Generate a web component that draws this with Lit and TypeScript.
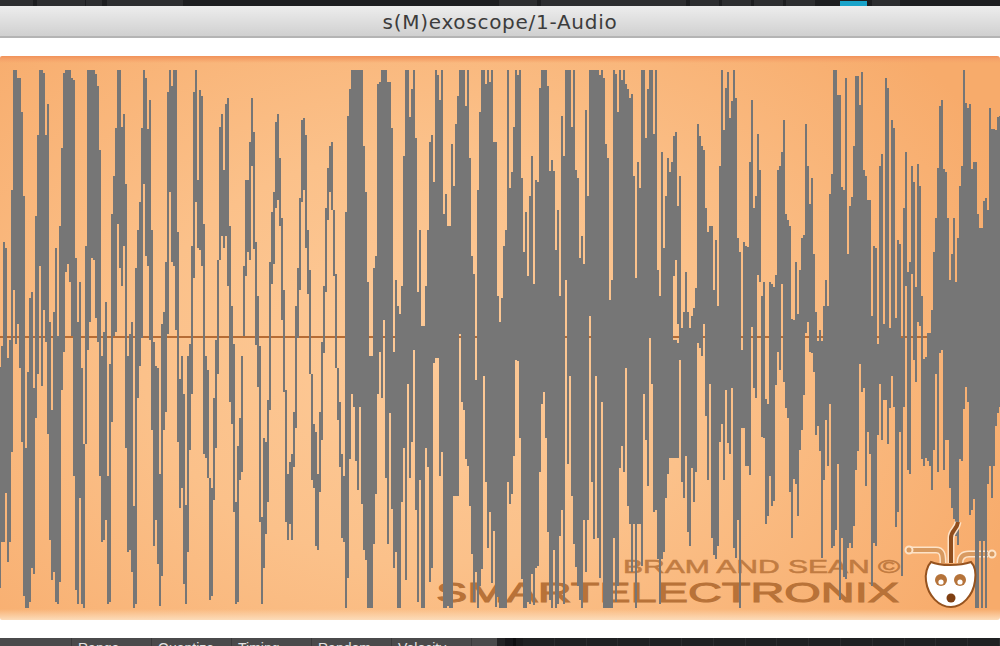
import { LitElement, html, css, svg } from "lit";
import { customElement } from "lit/decorators.js";

// Oscilloscope trace: one "top,bottom" span for each 2px column, in four sweeps.
const SWEEPS = [
  `870,1505 808,1372 510,1372 527,1230 843,1430 790,1372 360,1112 15,648 15,803 38,745 38,872 135,1085 377,1528 1102,1562 883,1562 670,1545 653,1447 930,1465 435,1015 200,888 15,578 15,923 22,705 200,797 112,1062 740,1367 993,1482 712,1458 527,1545 780,1550 463,1487 240,935 22,825 15,596 15,573 15,625 38,780 44,1182 555,1510 740,1550 625,1245 872,1550 1090,1562 522,1090 15,820 15,740 15,556 15,562 27,728 60,797 245,1182 838,1372 768,1367 683,1308 1182,1550 860,1545 430,1027 320,780 180,768 15,457 15,585 177,635 140,520 343,1102 838,1400 775,1395 740,1458 1270,1562 585,1550 475,958 395,865 180,785 15,343 38,550 185,578 100,790 475,1050 797,1383 866,1308 872,1437 1177,1556 745,1470 712,1050 567,998 78,775 15,365 60,567 15,578 15,762 480,1085 902,1275 838,1217 947,1493 1265,1550 838,1400 803,1107 522,947 78,612 15,393 330,527 72,533 90,578 457,1118 838,1130 878,1188 1188,1538 1217,1528 958,1252 792,1102 562,888 177,562 142,492 303,527 112,492 95,636 463,970 693,1033 803,1285 1257,1550 1097,1545 1017,1195 838,1170 578,780 330,607 330,538`,
  `222,560 95,290 193,530 510,805 665,925 808,1315 1300,1550 1073,1447 1085,1348 965,1257 568,992 423,630 366,572 165,412 142,388 268,462 440,735 648,940 936,1315 1177,1367 1142,1320 1120,1367 998,1158 693,1043 585,785 383,648 157,395 152,360 200,527 475,660 590,888 890,1195 1033,1217 1056,1383 1177,1395 998,1228 798,1078 636,830 412,653 295,446 233,365 222,417 417,607 602,873 873,1020 970,1158 1118,1360 1182,1372 423,1562 148,1475 68,1135 15,947 15,985 15,1140 15,1222 15,985 15,1262 233,1395 365,1423 625,1562 838,1562 838,1562 585,1378 550,1233 55,947 48,825 15,957 15,735 15,1187 48,1378 48,1002 180,1278 825,1447 620,1400 693,1562 715,1562 636,1257 262,1102 15,1482 15,918 150,1187 70,1085 15,820 210,1280 652,1545 475,1193 750,1562 750,1562 635,1102 475,1158 222,1487 200,1447 337,858 15,843 30,843 100,1182 15,1112 430,1562 372,1562 462,1556 462,1562 228,1562 348,1240 170,1240 90,1240 15,775 15,970 15,992 118,1135 15,1155 268,1270 550,1407 600,1545 905,1460 360,1562 135,1500 15,1450 15,895 55,1200 15,1390 50,1285 15,1490 222,1340 222,1560 665,1530`,
  `740,1562 670,1562 520,1562 475,1562 15,1200 355,1262 308,1235 177,1125 15,850 30,853 15,1073 325,1480 538,1562 423,1562 607,1545 378,1550 262,1465 630,1555 332,1447 337,1440 66,1172 15,975 15,942 15,1073 60,1343 306,1540 273,1562 305,1395 532,1562 418,1550 665,1355 148,1280 262,1550 15,620 15,1148 15,895 177,1240 15,1378 302,1445 325,1500 555,1540 492,1562 573,1310 130,1460 378,1310 15,722 15,1200 15,1365 15,895 15,1360 30,1475 15,970 38,1562 227,1562 268,1562 675,1562 620,1562 15,1360 25,1545 135,1500 15,1160 42,1097 15,1170 55,872 70,1270 95,1322 83,1460 320,1322 612,1562 280,1322 355,1322 15,1440 15,947 210,1078 68,1210 15,785 15,918 198,1285 15,1280 590,1420 665,1550 250,1420 527,1400 378,1245 268,1178 308,1130 280,1130 205,607+790,1132 193,560+790,1132 405,745+800,1130 320,850 757,1200 712,1245 596,1125 712,1345 757,1385 722,1160 700,1257 642,1170 170,800 205,815 233,838 245,745 412,1010 480,1195 463,918 463,1360 647,1410 503,1420 693,1385 292,1085 15,1033 187,1193 66,935 20,1088 152,1118 105,930 15,1390 95,1418 498,1310 538,1562 820,1043 510,1045 520,1155 525,1155`,
  `280,1180 100,755 410,930 377,958 198,603 302,623 665,1070 625,1073 960,1320 975,1298 625,1182 630,1268 640,1255 603,922 302,827 292,878 250,630 158,912 430,988 445,1015 463,1228 730,1360 735,1192 567,1205 715,1297 590,1108 497,1050 490,950 170,770 292,740 400,825 325,830 545,883 712,1065 795,1040 762,1110 795,1418 693,1193 620,1020 693,1155 372,975 315,1390 15,1385 15,1338 85,1148 85,1538 350,1360 360,1472 38,1480 545,1390 405,1375 380,1390 233,1325 32,1165 32,1110 115,860 20,940 302,930 320,1210 388,1055 388,1120 722,1500 520,1375 527,1385 803,1065 290,918 257,1078 745,965 38,963 65,1090 758,988 158,895 180,985 728,1330 503,1285 515,1055 785,1470 412,985 250,636 595,1165 568,1178 292,600 337,850 640,912 285,740 348,750 665,1135 845,1155 840,1130 770,1140 770,1155 705,1222 538,1108 440,888 295,1170 118,830 100,820 298,1165 308,1080 440,1078 620,1217 545,1275 440,1305 625,1355 498,1380 348,1135 292,1140 15,990 110,925 125,970 112,1295 300,1280 280,1250 280,1562 430,1562 468,1370 470,1562 390,1370 383,1562 418,1205 125,1155 185,1245 185,1155 188,1040 150,1000 148,985`,
];

const toY = (v: number) => Math.round(65 + (v * 545) / 1568);

function tracePath(): string {
  const cols = SWEEPS.join(" ").trim().split(/\s+/);
  return cols
    .map((col, k) =>
      col
        .split("+")
        .map((span) => {
          const [t, b] = span.split(",").map(Number);
          const top = toY(t);
          return `M${2 * k - 1} ${top}h2V${toY(b)}h-2z`;
        })
        .join("")
    )
    .join("");
}

const TRACE = tracePath();

const TOP_BUTTONS: [number, number, boolean?][] = [
  [0, 33], [37, 48], [86, 16], [107, 76], [499, 38], [541, 145],
  [690, 29], [722, 29], [754, 29], [786, 29], [840, 27, true], [872, 28],
];

@customElement("app-root")
export class AppRoot extends LitElement {
  static styles = css`
    :host {
      display: flex;
      flex-direction: column;
      width: 1000px;
      height: 646px;
      overflow: hidden;
      background: #fff;
    }
    .topbar {
      position: relative;
      flex: 0 0 6px;
      background: #1d1e20;
      overflow: hidden;
    }
    .tb {
      position: absolute;
      top: 0;
      height: 6px;
      background: #2d2e30;
    }
    .tb.on {
      top: 1px;
      height: 5px;
      background: #19a3c9;
    }
    .title {
      flex: 0 0 30px;
      display: flex;
      align-items: center;
      justify-content: center;
      box-sizing: border-box;
      background: linear-gradient(#ededed, #d0d0d0);
      font: 20px "DejaVu Sans", "Open Sans", sans-serif;
      letter-spacing: 0.72px;
      color: #3c3c3c;
      padding-top: 1px;
    }
    .title-edge {
      flex: 0 0 2px;
      background: #b4b4b4;
    }
    .margin {
      flex: 0 0 18px;
      background: #fff;
    }
    .scope {
      flex: 0 0 564px;
      border-radius: 2px 3px 3px 2px;
      background:
        linear-gradient(#f1925a 0, #f5a269 3px, rgba(247, 170, 110, 0) 7px),
        linear-gradient(to top, #fcdcba 0, rgba(252, 220, 186, 0) 11px),
        radial-gradient(ellipse 640px 460px at 430px 300px, #fdca98 0, #fbc18a 45%, #f7ab6b 100%);
      overflow: hidden;
    }
    .scope svg {
      display: block;
    }
    .axis {
      fill: #b56c35;
    }
    .trace {
      fill: #767676;
    }
    .brand {
      fill: #b87238;
      stroke: #b87238;
      font-family: "Liberation Sans", Arial, sans-serif;
      font-weight: 400;
    }
    .brand-small {
      font-size: 18px;
      stroke-width: 0.5px;
      opacity: 0.85;
    }
    .brand-large {
      font-size: 27px;
      stroke-width: 0.9px;
    }
    .wire-halo {
      fill: none;
      stroke: #fde3c8;
      stroke-width: 7;
    }
    .wire {
      fill: none;
      stroke: #d89a60;
      stroke-width: 4;
    }
    .wire-dark {
      fill: none;
      stroke: #8f4d1d;
      stroke-width: 4;
    }
    .wire-end {
      fill: #d89a60;
      stroke: #fde3c8;
      stroke-width: 2;
    }
    .head {
      fill: #fff;
      stroke: #96531f;
      stroke-width: 2;
    }
    .eye {
      fill: #b5733a;
    }
    .pupil {
      fill: #fff;
    }
    .mouth {
      fill: #7f3f12;
    }
    .footer {
      flex: 0 0 8px;
      display: flex;
      background: #1f2022;
      overflow: hidden;
    }
    .lane {
      display: flex;
      flex: 0 0 497px;
      background: #4a4a4b;
    }
    .lead {
      flex: 0 0 72px;
      box-sizing: border-box;
      border-right: 1px solid #3a3a3b;
    }
    .cell {
      flex: 0 0 80px;
      box-sizing: border-box;
      padding: 2px 0 0 6px;
      border-right: 1px solid #3a3a3b;
      font: 14px/16px "Liberation Sans", Arial, sans-serif;
      color: #e2e2e2;
    }
    .tail {
      flex: 1;
    }
    .gap {
      flex: 0 0 26px;
      background: linear-gradient(to right, #232325 0 30%, #17171a 30% 60%, #0e0e10 60% 75%, #1a1a1c 75%);
    }
    .keys {
      flex: 1;
      display: flex;
    }
    .keys i {
      flex: 1;
      border-right: 1px solid #2b2c2e;
    }
  `;

  render() {
    return html`
      <div class="topbar">
        ${TOP_BUTTONS.map(
          ([x, w, on]) =>
            html`<div class="tb ${on ? "on" : ""}" style="left:${x}px;width:${w}px"></div>`
        )}
      </div>
      <div class="title">s(M)exoscope/1-Audio</div>
      <div class="title-edge"></div>
      <div class="margin"></div>
      <div class="scope">
        <svg width="1000" height="564" viewBox="0 56 1000 564">
          <text class="brand brand-small" x="623" y="573" textLength="277" lengthAdjust="spacingAndGlyphs">BRAM AND SEAN ©</text>
          <text class="brand brand-large" x="436" y="602" textLength="463" lengthAdjust="spacingAndGlyphs">SMARTELECTRONIX</text>
          <rect class="axis" x="0" y="336" width="1000" height="2"></rect>
          ${this.rightWire()}
          <path class="trace" d=${TRACE}></path>
          ${this.socket()}
        </svg>
      </div>
      <div class="margin"></div>
      <div class="footer">
        <div class="lane">
          <div class="lead"></div>
          ${["Range", "Quantize", "Timing", "Random", "Velocity"].map(
            (t) => html`<div class="cell">${t}</div>`
          )}
          <div class="tail"></div>
        </div>
        <div class="gap"></div>
        <div class="keys">${Array.from({ length: 15 }, () => html`<i></i>`)}</div>
      </div>
    `;
  }

  private rightWire() {
    const d = "M960 563C960 557 963 554 969 554H988";
    return svg`
      <path class="wire-halo" d=${d}></path>
      <path class="wire" d=${d}></path>
      <circle class="wire-end" cx="992" cy="554" r="3.5"></circle>
    `;
  }

  private socket() {
    const left = "M943 563C943 554 942 550 936 550H911";
    const antenna = "M951 563V538C951 530 957 530 958 522";
    return svg`
      <path class="wire-halo" d=${left}></path>
      <path class="wire" d=${left}></path>
      <circle class="wire-end" cx="909" cy="550" r="3.5"></circle>
      <path class="wire-halo" d=${antenna}></path>
      <path class="wire-dark" d=${antenna}></path>
      <path class="head" d="M931 562C940 566 960 566 971 562C975 566 976 574 975 581C973 596 962 607 951 607C939 607 928 596 926 581C925 574 927 566 931 562Z"></path>
      <circle class="eye" cx="941" cy="580" r="6"></circle>
      <circle class="pupil" cx="941" cy="582" r="2.6"></circle>
      <circle class="eye" cx="960" cy="580" r="6"></circle>
      <circle class="pupil" cx="960" cy="582" r="2.6"></circle>
      <circle class="mouth" cx="951" cy="598" r="4.5"></circle>
    `;
  }
}
